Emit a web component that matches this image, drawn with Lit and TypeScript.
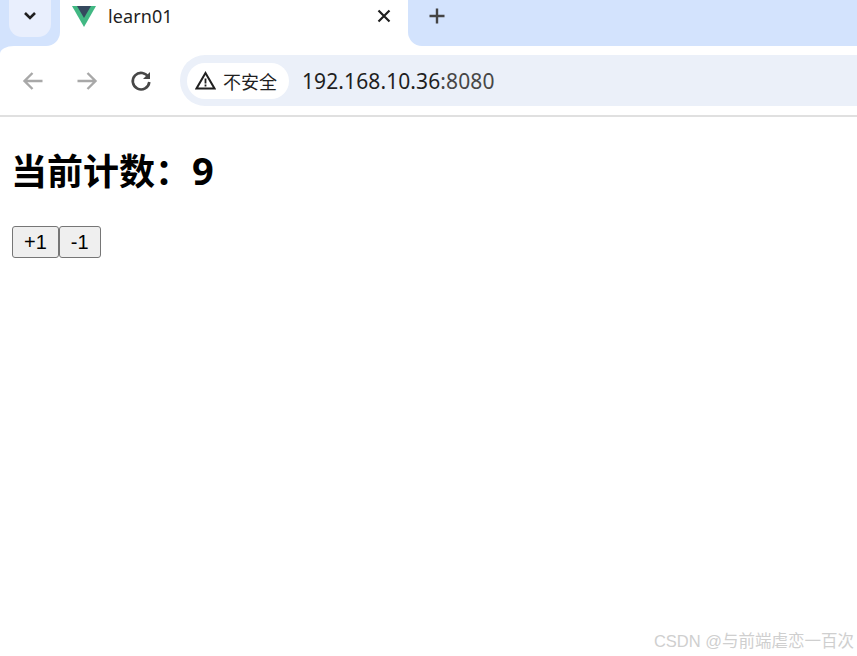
import { LitElement, html, css } from "lit";
import { customElement } from "lit/decorators.js";

@customElement("app-root")
export class AppRoot extends LitElement {
  static styles = css`
    :host { display: block; position: relative; height: 656px; overflow: hidden; background: #fff; font-family: "Noto Sans", "Noto Sans CJK SC", sans-serif; color: #1f1f1f; }
    .strip { display: flex; height: 46px; background: #fff; }
    .left { width: 60px; flex: none; background: #d3e3fd; border-bottom-right-radius: 14px; display: flex; align-items: flex-start; }
    .menu { width: 42px; height: 37px; margin-left: 9px; padding-bottom: 6px; box-sizing: border-box; border-radius: 0 0 13px 13px; background: #e9effd; display: flex; align-items: center; justify-content: center; }
    .tab { width: 348px; flex: none; display: flex; align-items: center; padding: 0 17px 0 12px; box-sizing: border-box; height: 32px; }
    .title { margin-left: 12px; font-size: 18px; line-height: 32px; color: #1f1f1f; flex: 1; letter-spacing: .1px; }
    .rest { flex: 1; background: #d3e3fd; border-bottom-left-radius: 14px; padding: 7px 0 0 20px; }
    .tbwrap { background: linear-gradient(to right, #d3e3fd 14px, #fff 14px); height: 71px; }
    .toolbar { box-sizing: border-box; background: #fff; border-top-left-radius: 14px 8px; border-bottom: 2px solid #e0e0e0; display: flex; align-items: flex-start; padding: 9px 0 0 20px; height: 71px; }
    .nav { display: flex; gap: 28px; flex: none; margin-top: 13px; width: 160px; }
    .nav svg { display: block; }
    .pill { flex: 1; height: 51px; background: #ebf0f9; border-radius: 25px 0 0 25px; display: flex; align-items: center; padding-left: 7px; }
    .chip { width: 102px; height: 36px; box-sizing: border-box; background: #fff; border-radius: 18px; display: flex; align-items: center; padding-left: 8px; font-size: 18px; color: #1f1f1f; font-family: "Noto Sans CJK SC", sans-serif; }
    .chip span { margin-left: 7px; }
    .url { margin-left: 13px; font-size: 21px; letter-spacing: .1px; color: #1f1f1f; }
    .url span { color: #474747; }
    main { padding: 0 12px; }
    h1 { margin: 28px 0 29px -1px; font-size: 36px; line-height: 50px; font-weight: 700; color: #000; font-family: "Noto Sans", "Noto Sans CJK SC", sans-serif; }
    .num { font-size: 38px; margin-left: 1px; line-height: 50px; }
    .btns { display: flex; }
    button { height: 32px; padding: 0 11px; box-sizing: border-box; font-family: "Liberation Sans", sans-serif; font-size: 20px; color: #000; background: #efefef; border: 1px solid #767676; border-radius: 3px; }
    .wm { position: absolute; right: 3px; top: 630px; font-size: 16.5px; line-height: 22px; color: #cfcfcf; font-family: "Liberation Sans", "Noto Sans CJK SC", sans-serif; white-space: nowrap; }
  `;

  render() {
    return html`
      <div class="strip">
        <div class="left">
          <div class="menu">
            <svg width="14" height="10" viewBox="0 0 14 10"><path d="M2 2 7 7l5-5" fill="none" stroke="#1f1f1f" stroke-width="2.600"/></svg>
          </div>
        </div>
        <div class="tab">
          <svg width="24" height="21" viewBox="0 0 24 21"><path d="M0 0h24L12 21z" fill="#41b883"/><path d="M5 0h14l-7 12z" fill="#35495e"/></svg>
          <div class="title">learn01</div>
          <svg width="14" height="14" viewBox="0 0 14 14"><path d="M1.500 1.500l11 11M12.500 1.500l-11 11" stroke="#1f1f1f" stroke-width="2.200" fill="none"/></svg>
        </div>
        <div class="rest">
          <svg width="18" height="18" viewBox="0 0 18 18"><path d="M9 1.500v15M1.500 9h15" stroke="#444" stroke-width="2.400" fill="none"/></svg>
        </div>
      </div>
      <div class="tbwrap">
        <div class="toolbar">
          <div class="nav">
            <svg width="26" height="26" viewBox="0 0 26 26"><path d="M22.500 13H5M12.500 5 4.500 13l8 8" fill="none" stroke="#a8a8a8" stroke-width="2.400"/></svg>
            <svg width="26" height="26" viewBox="0 0 26 26"><path d="M3.500 13H21M13.500 5l8 8-8 8" fill="none" stroke="#a8a8a8" stroke-width="2.400"/></svg>
            <svg width="26" height="26" viewBox="0 0 26 26"><path d="M20.500 9.500A8.300 8.300 0 1 0 21.300 14" fill="none" stroke="#474747" stroke-width="2.600"/><path d="M22 4v7h-7z" fill="#474747"/></svg>
          </div>
          <div class="pill">
            <div class="chip">
              <svg width="21" height="19" viewBox="0 0 21 19"><path d="M10.500 2 19.500 17.500h-18z" fill="none" stroke="#1f1f1f" stroke-width="2"/><path d="M10.500 7.500v5M10.500 13.500v2" stroke="#1f1f1f" stroke-width="1.800"/></svg>
              <span>不安全</span>
            </div>
            <div class="url">192.168.10.36<span>:8080</span></div>
          </div>
        </div>
      </div>
      <main>
        <h1>当前计数：<span class="num">9</span></h1>
        <div class="btns"><button>+1</button><button>-1</button></div>
      </main>
      <div class="wm">CSDN @与前端虐恋一百次</div>
    `;
  }
}
